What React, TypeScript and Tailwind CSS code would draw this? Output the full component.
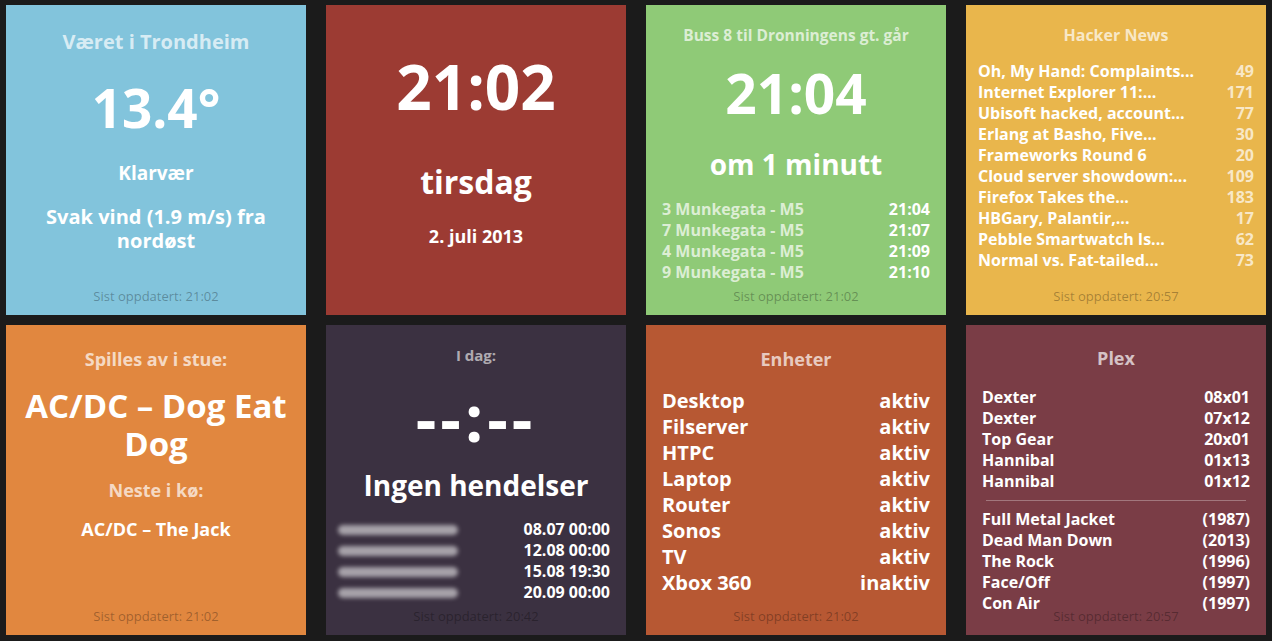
import type { ReactNode } from 'react';

type Row = [string, string];

const bus: Row[] = [
    ['3 Munkegata - M5', '21:04'],
    ['7 Munkegata - M5', '21:07'],
    ['4 Munkegata - M5', '21:09'],
    ['9 Munkegata - M5', '21:10'],
];

const news: Row[] = [
    ['Oh, My Hand: Complaints...', '49'],
    ['Internet Explorer 11:...', '171'],
    ['Ubisoft hacked, account...', '77'],
    ['Erlang at Basho, Five...', '30'],
    ['Frameworks Round 6', '20'],
    ['Cloud server showdown:...', '109'],
    ['Firefox Takes the...', '183'],
    ['HBGary, Palantir,...', '17'],
    ['Pebble Smartwatch Is...', '62'],
    ['Normal vs. Fat-tailed...', '73'],
];

const events = ['08.07 00:00', '12.08 00:00', '15.08 19:30', '20.09 00:00'];

const devices: Row[] = [
    ['Desktop', 'aktiv'],
    ['Filserver', 'aktiv'],
    ['HTPC', 'aktiv'],
    ['Laptop', 'aktiv'],
    ['Router', 'aktiv'],
    ['Sonos', 'aktiv'],
    ['TV', 'aktiv'],
    ['Xbox 360', 'inaktiv'],
];

const episodes: Row[] = [
    ['Dexter', '08x01'],
    ['Dexter', '07x12'],
    ['Top Gear', '20x01'],
    ['Hannibal', '01x13'],
    ['Hannibal', '01x12'],
];

const movies: Row[] = [
    ['Full Metal Jacket', '(1987)'],
    ['Dead Man Down', '(2013)'],
    ['The Rock', '(1996)'],
    ['Face/Off', '(1997)'],
    ['Con Air', '(1997)'],
];

function Tile({ bg, pt, updated, children }: { bg: string; pt: string; updated?: string; children: ReactNode }) {
    return (
        <div className={`relative flex flex-col items-center text-center text-white ${bg} ${pt}`}>
            {children}
            {updated && (
                <p className="absolute bottom-[11px] left-0 right-0 text-[13px] leading-[15px] font-normal text-black/30">
                    Sist oppdatert: {updated}
                </p>
            )}
        </div>
    );
}

function App() {
    return (
        <div className="min-h-screen w-full bg-[#1b1b1b] pl-[6px] pt-[5px] font-['Open_Sans',sans-serif] font-bold">
            <div className="grid grid-cols-[repeat(4,300px)] grid-rows-[repeat(2,310px)] gap-x-[20px] gap-y-[10px]">
                {/* Weather */}
                <Tile bg="bg-[#82c4dc]" pt="pt-[25px]" updated="21:02">
                    <h1 className="text-[20px] leading-[24px] text-white/70">Været i Trondheim</h1>
                    <h2 className="mt-[22px] text-[53px] leading-[64px]">13.4°</h2>
                    <p className="mt-[21px] text-[19px] leading-[24px]">Klarvær</p>
                    <p className="mt-[20px] px-[12px] text-[20px] leading-[24px]">Svak vind (1.9 m/s) fra nordøst</p>
                </Tile>

                {/* Clock */}
                <Tile bg="bg-[#9c3b33]" pt="pt-[45px]">
                    <h1 className="text-[62px] leading-[72px]">21:02</h1>
                    <h2 className="mt-[41px] text-[32px] leading-[38px]">tirsdag</h2>
                    <p className="mt-[24px] text-[18px] leading-[22px]">2. juli 2013</p>
                </Tile>

                {/* Bus */}
                <Tile bg="bg-[#8fca77]" pt="pt-[21px]" updated="21:02">
                    <h1 className="text-[15.5px] leading-[18px] text-white/70">Buss 8 til Dronningens gt. går</h1>
                    <h2 className="mt-[17px] text-[55px] leading-[64px]">21:04</h2>
                    <p className="mt-[22px] text-[28px] leading-[34px]">om 1 minutt</p>
                    <ul className="mt-[18px] w-full px-[16px] text-[16px] leading-[21px]">
                        {bus.map(([name, time]) => (
                            <li key={time} className="flex justify-between">
                                <span className="text-white/70">{name}</span>
                                <span>{time}</span>
                            </li>
                        ))}
                    </ul>
                </Tile>

                {/* Hacker News */}
                <Tile bg="bg-[#e9b64c]" pt="pt-[20px]" updated="20:57">
                    <h1 className="text-[16px] leading-[20px] text-white/70">Hacker News</h1>
                    <ul className="mt-[16px] w-full px-[12px] text-[16px] leading-[21px]">
                        {news.map(([title, score]) => (
                            <li key={title} className="flex justify-between">
                                <span>{title}</span>
                                <span className="text-white/70">{score}</span>
                            </li>
                        ))}
                    </ul>
                </Tile>

                {/* Now playing */}
                <Tile bg="bg-[#e1873f]" pt="pt-[23px]" updated="21:02">
                    <h1 className="text-[18px] leading-[22px] text-white/70">Spilles av i stue:</h1>
                    <h2 className="mt-[17px] text-[33px] leading-[38px]">
                        AC/DC – Dog Eat
                        <br />
                        Dog
                    </h2>
                    <p className="mt-[16px] text-[18px] leading-[22px] text-white/70">Neste i kø:</p>
                    <p className="mt-[17px] text-[18px] leading-[22px]">AC/DC – The Jack</p>
                </Tile>

                {/* Calendar */}
                <Tile bg="bg-[#3b3141]" pt="pt-[21px]" updated="20:42">
                    <h1 className="text-[15px] leading-[18px] text-white/60">I dag:</h1>
                    <h2 className="mt-[24px] text-[64px] leading-[60px] tracking-[4px]">--:--</h2>
                    <p className="mt-[20px] text-[28px] leading-[34px]">Ingen hendelser</p>
                    <ul className="mt-[17px] w-full pl-[12px] pr-[16px] text-[16px] leading-[21px]">
                        {events.map((date) => (
                            <li key={date} className="flex items-center justify-between">
                                <span className="h-[10px] w-[120px] rounded-full bg-white/55 blur-[2px]" />
                                <span>{date}</span>
                            </li>
                        ))}
                    </ul>
                </Tile>

                {/* Devices */}
                <Tile bg="bg-[#b75833]" pt="pt-[23px]" updated="21:02">
                    <h1 className="text-[18px] leading-[22px] text-white/70">Enheter</h1>
                    <ul className="mt-[18px] w-full px-[16px] text-[20px] leading-[26px]">
                        {devices.map(([name, state]) => (
                            <li key={name} className="flex justify-between">
                                <span>{name}</span>
                                <span>{state}</span>
                            </li>
                        ))}
                    </ul>
                </Tile>

                {/* Plex */}
                <Tile bg="bg-[#7a3d46]" pt="pt-[22px]" updated="20:57">
                    <h1 className="text-[18px] leading-[22px] text-white/70">Plex</h1>
                    <ul className="mt-[18px] w-full px-[16px] text-[16px] leading-[21px]">
                        {episodes.map(([show, ep]) => (
                            <li key={ep} className="flex justify-between">
                                <span>{show}</span>
                                <span>{ep}</span>
                            </li>
                        ))}
                    </ul>
                    <hr className="mx-[20px] mt-[8px] self-stretch border-white/30" />
                    <ul className="mt-[8px] w-full px-[16px] text-[16px] leading-[21px]">
                        {movies.map(([title, year]) => (
                            <li key={title} className="flex justify-between">
                                <span>{title}</span>
                                <span>{year}</span>
                            </li>
                        ))}
                    </ul>
                </Tile>
            </div>
        </div>
    );
}

export default App;
